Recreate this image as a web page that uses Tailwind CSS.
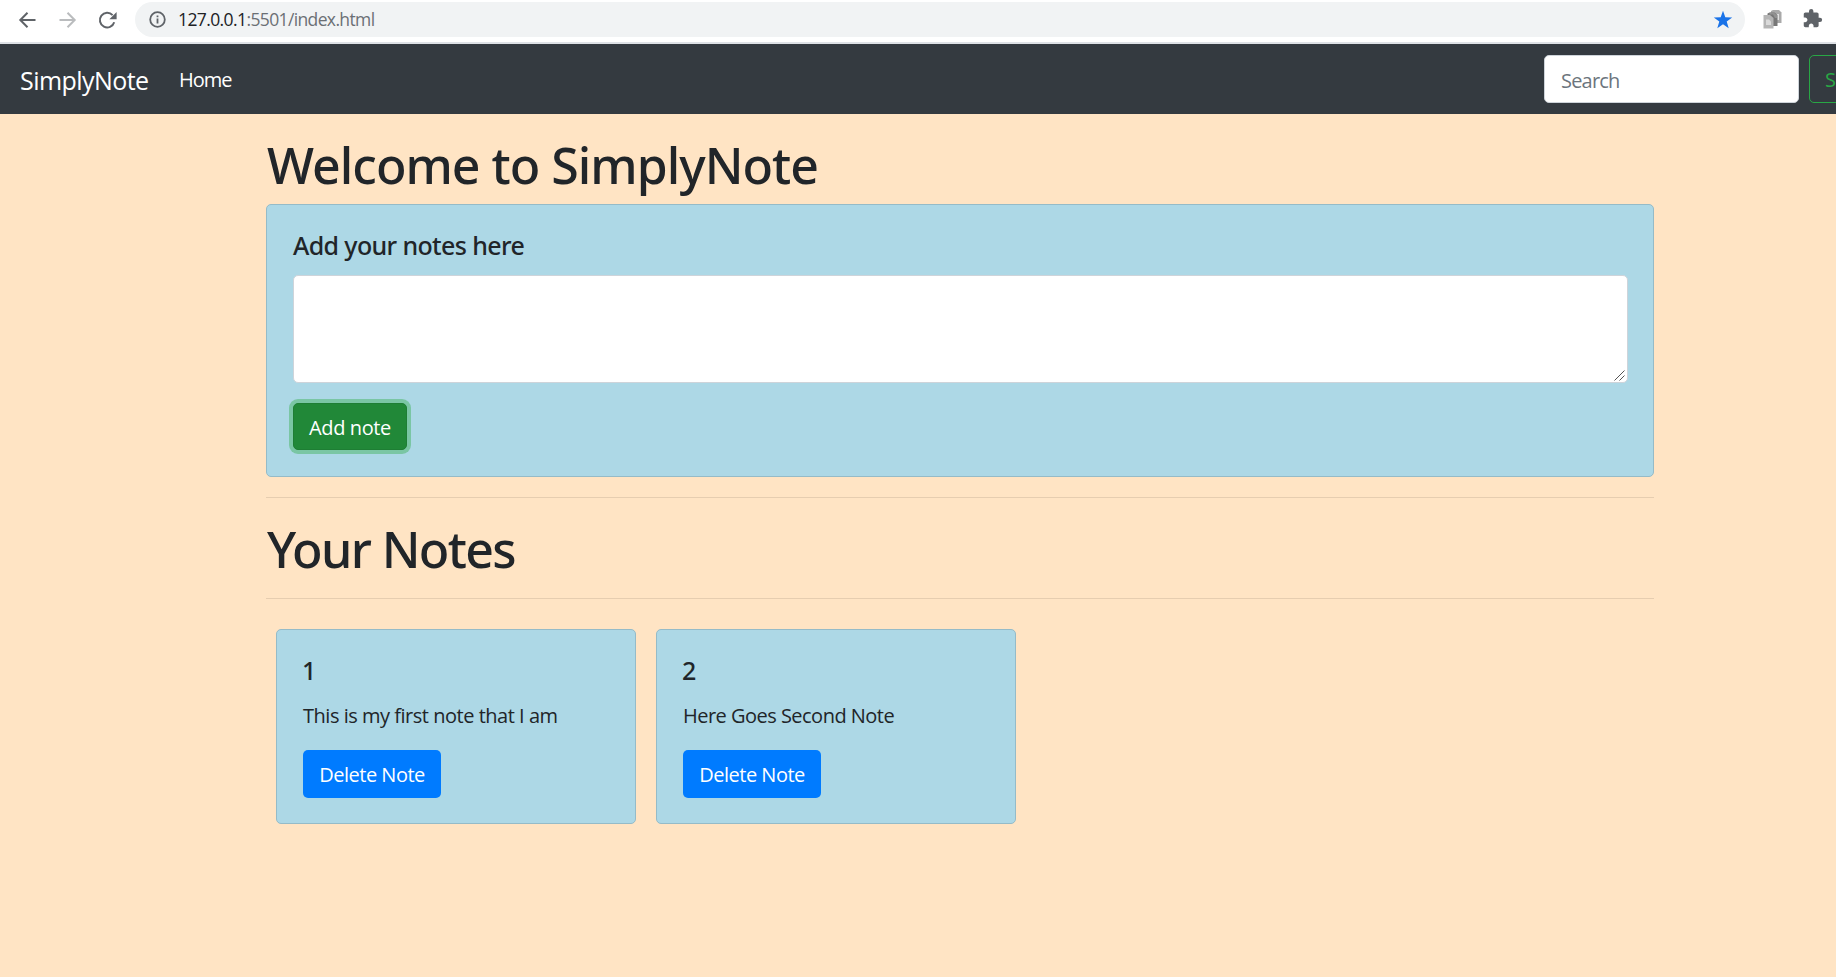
<!DOCTYPE html>
<html lang="en">
<head>
<meta charset="utf-8">
<title>SimplyNote</title>
<script src="https://cdn.jsdelivr.net/npm/@tailwindcss/browser@4"></script>
</head>
<body class="h-[977px] overflow-hidden bg-[#ffe4c4] font-['Open_Sans',sans-serif] text-[20px] leading-[30px] text-[#212529]">

<!-- Browser toolbar -->
<div class="flex h-11 items-start border-b-2 border-[#dee1e6] bg-white">
  <div class="flex h-[39px] items-center pl-[17px] text-[#5f6368]">
    <svg class="h-5 w-5" viewBox="0 0 20 20" fill="none" stroke="currentColor" stroke-width="2"><path d="M18.5 10H3.5M10.5 2.8L3.3 10L10.5 17.2"/></svg>
    <svg class="ml-5 h-5 w-5 text-[#babcbe]" viewBox="0 0 20 20" fill="none" stroke="currentColor" stroke-width="2"><path d="M2.500 10H17.500M10.500 2.800L17.700 10L10.500 17.200"/></svg>
    <svg class="ml-5 h-5 w-5" viewBox="0 0 20 20" fill="none" stroke="currentColor" stroke-width="2"><path d="M15.600 5.200A7.300 7.300 0 1 0 17.200 12.200"/><path d="M19.600 2V9.200H12.400Z" fill="currentColor" stroke="none"/></svg>
  </div>
  <div class="mt-[2px] ml-[18px] flex h-[35px] w-[1610px] items-center rounded-full bg-[#f1f3f4] pr-[12px] pl-[14px]">
    <svg class="h-[17px] w-[17px] text-[#5f6368]" viewBox="0 0 17 17" fill="none" stroke="currentColor" stroke-width="1.8"><circle cx="8.5" cy="8.5" r="7.3"/><path d="M8.500 7.600V12.400M8.500 4.500V6.300"/></svg>
    <div class="-mt-[2px] ml-[12px] flex text-[17.5px] leading-[24px]"><span class="tracking-[-0.6px] text-[#202124]">127.0.0.1</span><span class="tracking-[-0.63px] text-[#6b6f74]">:5501/index.html</span></div>
    <svg class="ml-auto h-5 w-5 text-[#1a73e8]" viewBox="0 0 20 20" fill="currentColor"><path d="M10 .8L12.300 7.300L19.200 7.400L13.700 11.600L15.700 18.300L10 14.300L4.300 18.300L6.300 11.600L.8 7.400L7.700 7.300Z"/></svg>
  </div>
  <svg class="mt-[9px] ml-[18px] h-5 w-5 shrink-0" viewBox="0 0 20 20">
    <path d="M8 2L10 1H16L18.500 3.500V14H8Z" fill="#a9a9a9"/><path d="M13 5H16V11H13Z" fill="#e2e2e2"/>
    <path d="M4.500 4.500L6.500 3.500H11.500L14.500 6V17H4.500Z" fill="#777"/><path d="M7 3.500H11L14 6.500V9H12L10 5.500H6Z" fill="#929292"/>
    <path d="M.5 6H7L10.500 9V19.500H.5Z" fill="#b5b5b5"/><path d="M3 10.500H6L8 12.500V16H3Z" fill="#dadada"/>
  </svg>
  <svg class="mt-[8px] ml-[19px] h-[21px] w-[21px] shrink-0 text-[#5f6368]" viewBox="0 0 24 24" fill="currentColor"><path d="M20.500 11H19V7c0-1.100-.9-2-2-2h-4V3.500a2.500 2.500 0 0 0-5 0V5H4c-1.100 0-1.990.9-1.990 2v3.800H3.500c1.490 0 2.700 1.210 2.700 2.700s-1.210 2.700-2.700 2.700H2V20c0 1.100.9 2 2 2h3.800v-1.500c0-1.490 1.210-2.700 2.700-2.700s2.700 1.210 2.700 2.700V22H17c1.100 0 2-.9 2-2v-4h1.500a2.500 2.500 0 0 0 0-5z"/></svg>
</div>

<!-- Navbar: the search button runs past the right edge of the window -->
<div class="w-full overflow-hidden bg-[#343a40]">
  <nav class="flex h-[70px] w-[1898px] items-center pl-5">
    <a class="w-[139px] pt-[2px] text-[25px] tracking-[-0.56px] text-white">SimplyNote</a>
    <a class="pt-[2px] pl-5 tracking-[-1px] text-white">Home</a>
    <form class="ml-auto flex gap-[10px]">
      <input class="h-12 w-[255px] rounded-[5px] border border-[#ced4da] bg-white px-4 pt-[3px] tracking-[-0.81px] placeholder:text-[#6c757d]" placeholder="Search">
      <button type="button" class="h-12 w-[89px] rounded-[5px] border border-[#28a745] px-[15px] pt-[2px] text-left tracking-[-0.81px] text-[#28a745]">Search</button>
    </form>
  </nav>
</div>

<main class="ml-[266px] w-[1388px]">
  <h1 class="mt-[21px] mb-[9px] pl-px font-['Noto_Sans',sans-serif] text-[50px] leading-[60px] font-medium tracking-[-0.98px]">Welcome to SimplyNote</h1>

  <section class="h-[273px] rounded-[5px] border border-[#95bbc8] bg-[#add8e6] p-[26px] pt-[25px]">
    <h5 class="mb-[15px] font-['Noto_Sans',sans-serif] text-[25px] leading-[30px] font-medium tracking-[-0.63px]">Add your notes here</h5>
    <div class="relative">
      <textarea class="block h-[108px] w-[1335px] resize-none rounded-[5px] border border-[#ced4da] bg-white"></textarea>
      <svg class="absolute right-[2px] bottom-[2px] h-[11px] w-[11px]" viewBox="0 0 11 11" fill="none" stroke="#555" stroke-width="1"><path d="M.5 10.500L10.500 .5M5.500 10.500L10.500 5.500"/></svg>
    </div>
    <button class="mt-[20px] h-[47px] w-[114px] rounded-[5px] border border-[#1e7e34] bg-[#218838] pt-[2px] tracking-[-0.39px] text-white ring-4 ring-[#48b461]/50">Add note</button>
  </section>

  <hr class="mt-5 mb-[21px] border-t border-[#e6cdb0]">
  <h1 class="mb-[19px] pl-px font-['Noto_Sans',sans-serif] text-[50px] leading-[60px] font-medium tracking-[-1.62px]">Your Notes</h1>
  <hr class="mb-5 border-t border-[#e6cdb0]">

  <div class="flex gap-5 px-[10px] pt-[10px]">
    <article class="h-[195px] w-[360px] rounded-[5px] border border-[#95bbc8] bg-[#add8e6] px-[26px] py-[25px]">
      <h5 class="mb-[16px] -ml-px font-['Noto_Sans',sans-serif] text-[25px] leading-[30px] font-medium">1</h5>
      <p class="mb-[19px] tracking-[-0.48px]">This is my first note that I am</p>
      <button class="h-12 w-[138px] rounded-[5px] bg-[#007bff] pt-[2px] tracking-[-0.48px] text-white">Delete Note</button>
    </article>
    <article class="h-[195px] w-[360px] rounded-[5px] border border-[#95bbc8] bg-[#add8e6] px-[26px] py-[25px]">
      <h5 class="mb-[16px] -ml-px font-['Noto_Sans',sans-serif] text-[25px] leading-[30px] font-medium">2</h5>
      <p class="mb-[19px] tracking-[-0.52px]">Here Goes Second Note</p>
      <button class="h-12 w-[138px] rounded-[5px] bg-[#007bff] pt-[2px] tracking-[-0.48px] text-white">Delete Note</button>
    </article>
  </div>
</main>
</body>
</html>
